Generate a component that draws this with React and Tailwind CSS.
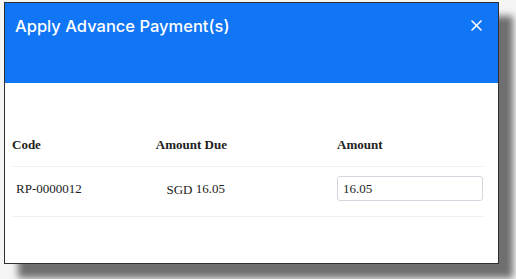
import React from "react";

const App = () => {
  return (
    <div className="w-[516px] h-[279px] bg-[#f5f5f5] pt-[2px] pl-[4px] overflow-hidden">
      <div className="w-[495px] h-[262px] bg-white border border-[#2e2e2e] shadow-[14px_14px_7px_rgba(0,0,0,0.55)] flex flex-col">
        <div className="h-[80px] bg-[#1076f5] flex items-start justify-between pl-[10px] pr-[16px] pt-[12px]">
          <h1 className="text-white text-[16.5px] font-medium leading-[22px] font-['Inter',sans-serif]">
            Apply Advance Payment(s)
          </h1>
          <button className="text-white mt-[5px]">
            <svg width="11" height="11" viewBox="0 0 11 11" fill="none">
              <path d="M1 1L10 10M10 1L1 10" stroke="white" strokeWidth="1.6" strokeLinecap="round" />
            </svg>
          </button>
        </div>
        <div className="pt-[47px] pl-[7px] font-['Liberation_Serif','Times_New_Roman',serif]">
          <div className="w-[472px] text-[13px] text-[#222]">
            <div className="flex h-[37px] items-start pt-[7px] border-b border-[#f0f0f0] font-bold leading-[15px]">
              <div className="w-[130px]">Code</div>
              <div className="w-[85px] text-right">Amount Due</div>
              <div className="w-[110px]" />
              <div className="w-[146px]">Amount</div>
            </div>
            <div className="flex h-[50px] items-center pb-[6px] border-b border-[#f0f0f0] leading-[15px]">
              <div className="w-[130px] pl-[4px]">RP-0000012</div>
              <div className="w-[85px] text-right pr-[2px]">
                SGD <span className="align-[1px]">16.05</span>
              </div>
              <div className="w-[110px]" />
              <div className="w-[146px]">
                <input
                  defaultValue="16.05"
                  className="w-[146px] h-[25px] border border-[#d6d6e0] rounded-[3px] pl-[5px] text-[13px] text-[#222] outline-none font-['Liberation_Serif','Times_New_Roman',serif]"
                />
              </div>
            </div>
          </div>
        </div>
      </div>
    </div>
  );
};

export default App;
